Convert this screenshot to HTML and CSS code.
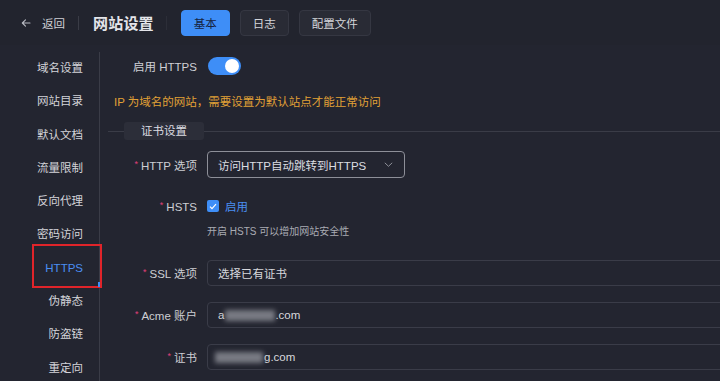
FILE: index.html
```html
<!DOCTYPE html>
<html lang="zh-CN">
<head>
<meta charset="utf-8">
<title>网站设置</title>
<link rel="stylesheet" href="styles.css">
</head>
<body>
<div class="app">
  <header class="topbar">
    <a class="back">
      <svg class="back-icon" width="10" height="10" viewBox="0 0 10 10"><path d="M9 5H1.5M4.5 1.8L1.3 5l3.2 3.2" fill="none" stroke="#b8bac2" stroke-width="1.1" stroke-linecap="round" stroke-linejoin="round"/></svg>
      <span>返回</span>
    </a>
    <span class="sep"></span>
    <h1 class="title">网站设置</h1>
    <span class="sep sep-faint"></span>
    <nav class="tabs">
      <button class="tab tab-active">基本</button>
      <button class="tab">日志</button>
      <button class="tab">配置文件</button>
    </nav>
  </header>
  <div class="body">
    <aside class="sidebar">
      <div class="menu-item">域名设置</div>
      <div class="menu-item">网站目录</div>
      <div class="menu-item">默认文档</div>
      <div class="menu-item">流量限制</div>
      <div class="menu-item">反向代理</div>
      <div class="menu-item">密码访问</div>
      <div class="menu-item menu-active">HTTPS<span class="mark"></span></div>
      <div class="menu-item">伪静态</div>
      <div class="menu-item">防盗链</div>
      <div class="menu-item">重定向</div>
    </aside>
    <main class="content">
      <div class="enable-row">
        <span class="enable-label">启用 HTTPS</span>
        <span class="switch"><span class="knob"></span></span>
      </div>
      <p class="warning">IP 为域名的网站，需要设置为默认站点才能正常访问</p>
      <div class="section-head">
        <span class="line-short"></span>
        <span class="legend">证书设置</span>
        <span class="line-long"></span>
      </div>
      <div class="form-row row-http">
        <label class="label"><i class="req">*</i>HTTP 选项</label>
        <div class="select">
          <span>访问HTTP自动跳转到HTTPS</span>
          <svg width="9" height="5" viewBox="0 0 9 5"><path d="M0.8 0.8l3.7 3.5 3.7-3.5" fill="none" stroke="#9a9ca4" stroke-width="0.9"/></svg>
        </div>
      </div>
      <div class="form-row row-hsts">
        <label class="label"><i class="req">*</i>HSTS</label>
        <span class="checkbox"><svg width="8" height="7" viewBox="0 0 8 7"><path d="M1 3.6l2 2L7 1.2" fill="none" stroke="#fff" stroke-width="1.2"/></svg></span>
        <span class="check-text">启用</span>
      </div>
      <div class="help">开启 HSTS 可以增加网站安全性</div>
      <div class="form-row row-input row-ssl">
        <label class="label"><i class="req">*</i>SSL 选项</label>
        <div class="input">选择已有证书</div>
      </div>
      <div class="form-row row-input">
        <label class="label"><i class="req">*</i>Acme 账户</label>
        <div class="input">a<span class="blur blur-a"></span>.com</div>
      </div>
      <div class="form-row row-input row-cert">
        <label class="label"><i class="req">*</i>证书</label>
        <div class="input input-cert"><span class="blur blur-b"></span>g.com</div>
      </div>
    </main>
  </div>
</div>
</body>
</html>
```

FILE: styles.css
```css
* { box-sizing: border-box; margin: 0; padding: 0; }
html, body { width: 720px; height: 381px; overflow: hidden; }
body {
  background: #232530;
  font-family: "Liberation Sans", "Noto Sans CJK SC", sans-serif;
  color: #d2d3d8;
  font-size: 11.5px;
}
.app { display: flex; flex-direction: column; height: 381px; }

.topbar {
  height: 45px;
  flex-shrink: 0;
  display: flex;
  align-items: center;
  padding-left: 21px;
  background: #22242e;
}
.back { display: flex; align-items: center; color: #d0d1d6; font-size: 11.5px; }
.back-icon { margin-right: 11px; }
.sep { width: 1px; height: 14px; background: #3a3c46; margin: 0 14px 0 13px; }
.sep-faint { background: #2c2e38; margin: 0 14px 0 12px; }
.title { font-size: 15px; font-weight: bold; color: #e4e5ea; letter-spacing: 0.2px; }
.tabs { display: flex; gap: 10px; }
.tab {
  height: 26px;
  padding: 0 12px;
  font-family: inherit;
  font-size: 11.5px;
  color: #d5d6db;
  background: #292b35;
  border: 1px solid #353742;
  border-radius: 4px;
}
.tab-active { background: #3e8ef7; border-color: #3e8ef7; color: #16233f; }

.body { flex: 1; display: flex; min-height: 0; }
.sidebar {
  width: 100px;
  flex-shrink: 0;
  border-right: 1px solid #3a3c47;
  margin-top: 7px;
  display: flex;
  flex-direction: column;
}
.menu-item {
  position: relative;
  height: 33.3px;
  flex-shrink: 0;
  line-height: 33px;
  text-align: right;
  padding-right: 16px;
  color: #d3d4d9;
  white-space: nowrap;
}
.menu-active { color: #4a8ef2; }
.menu-active::before {
  content: "";
  position: absolute;
  left: 32px;
  top: -8px;
  width: 66px;
  height: 40px;
  border: 2px solid #e0242a;
}
.mark {
  position: absolute;
  right: -1px;
  top: 30px;
  width: 2px;
  height: 5px;
  background: #3e8ef7;
}

.content { flex: 1; min-width: 0; overflow: hidden; padding-top: 10px; }
.enable-row { display: flex; align-items: center; height: 22px; padding-left: 33px; }
.enable-label { color: #cfd0d5; }
.switch {
  margin-left: 11px;
  width: 33px;
  height: 18px;
  border-radius: 9px;
  background: #3e8ef7;
  display: flex;
  align-items: center;
  justify-content: flex-end;
  padding-right: 2px;
}
.knob { width: 14px; height: 14px; border-radius: 50%; background: #fff; }

.warning { margin-top: 15px; padding-left: 14px; line-height: 20px; color: #e1a136; white-space: nowrap; }

.section-head { margin-top: 10px; display: flex; align-items: center; height: 18px; padding-left: 8px; }
.line-short { width: 16px; height: 1px; background: #3a3c47; }
.line-long { flex: 1; height: 1px; background: #3a3c47; }
.legend {
  width: 80px;
  height: 18px;
  line-height: 18px;
  text-align: center;
  background: #2c2e39;
  color: #dcdde2;
  border-radius: 3px;
}

.form-row { display: flex; align-items: center; }
.label { width: 97px; flex-shrink: 0; text-align: right; margin-right: 10px; color: #cdced3; white-space: nowrap; }
.req { font-style: normal; color: #e0407a; font-size: 9px; margin-right: 3px; vertical-align: 3px; }
.row-http { margin-top: 11px; height: 27px; }
.select {
  width: 198px;
  flex-shrink: 0;
  height: 27px;
  border: 1px solid #8d8f98;
  border-radius: 4px;
  display: flex;
  align-items: center;
  justify-content: space-between;
  padding: 0 11px 0 10px;
  color: #dcdde2;
  white-space: nowrap;
}
.row-hsts { margin-top: 18px; height: 20px; }
.checkbox {
  width: 12px; height: 12px;
  background: #3e8ef7;
  border-radius: 2px;
  display: flex; align-items: center; justify-content: center;
}
.check-text { margin-left: 6px; color: #4a8ef2; }
.help { margin-top: 8px; padding-left: 107px; font-size: 10px; line-height: 16px; color: #a9abb3; white-space: nowrap; }

.row-input { margin-top: 16px; height: 26px; }
.row-ssl { margin-top: 20px; }
.row-cert { margin-top: 16px; }
.input {
  width: 600px;
  flex-shrink: 0;
  height: 26px;
  border: 1px solid #3a3c48;
  border-radius: 4px;
  padding-left: 10px;
  display: flex;
  align-items: center;
  color: #d7d8dd;
  white-space: nowrap;
}
.input-cert { padding-left: 7px; }
.blur { display: inline-block; height: 11px; background: #8e9098; filter: blur(2.5px); opacity: 0.8; }
.blur-a { width: 50px; margin-left: 1px; }
.blur-b { width: 48px; margin-right: 1px; }
```
